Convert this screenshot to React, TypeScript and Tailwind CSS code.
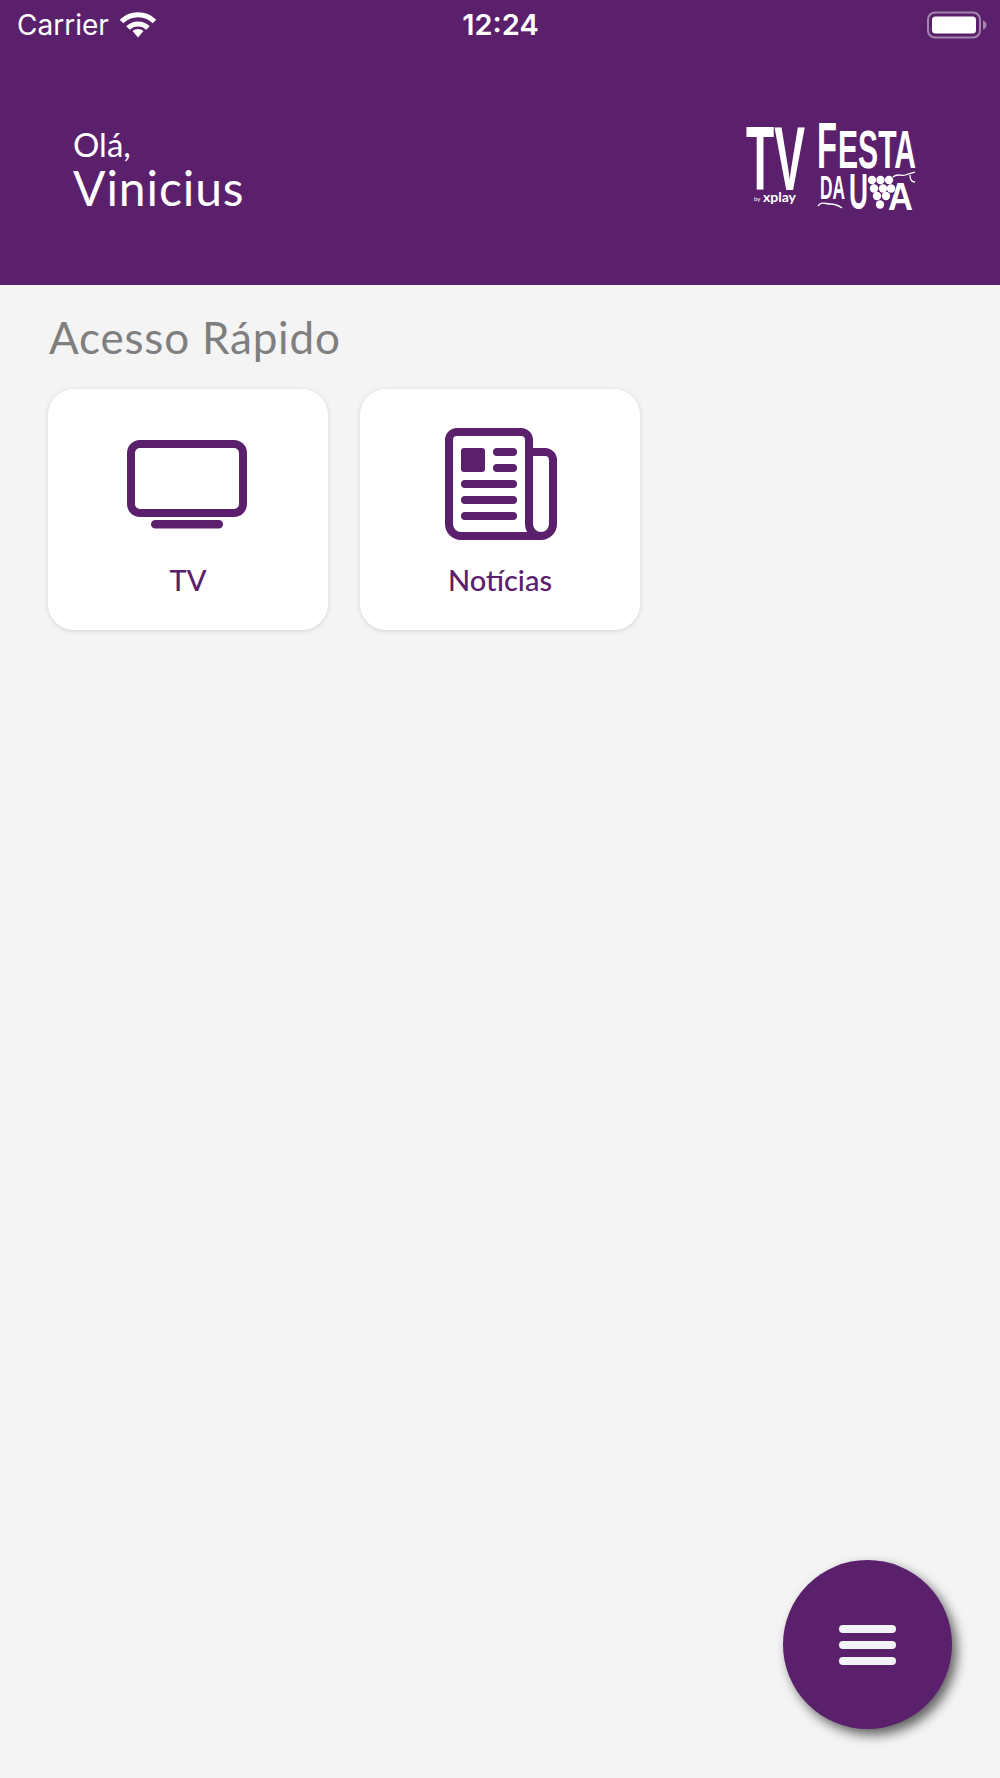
import React from "react";

const font = "font-['Lato','Noto_Sans',sans-serif]";
const sys = "font-['Inter','Liberation_Sans',sans-serif]";

function Wifi() {
  return (
    <svg width="38" height="28" viewBox="0 0 38 28" fill="none" stroke="#fff" strokeWidth="5">
      <path d="M2.5 10.5C11.5 1.5 26.5 1.5 35.5 10.5" />
      <path d="M9 17C14.5 11.5 23.5 11.5 29 17" />
      <path d="M13.5 20L19 26.5L24.5 20C21.5 17.2 16.5 17.2 13.5 20Z" fill="#fff" stroke="none" />
    </svg>
  );
}

function Battery() {
  return (
    <svg width="60" height="28" viewBox="0 0 60 28" fill="none">
      <rect x="1" y="1.5" width="52" height="25" rx="7" stroke="#fff" strokeOpacity="0.45" strokeWidth="2" />
      <rect x="5" y="5.5" width="44" height="17" rx="3.5" fill="#fff" />
      <path d="M56 9.5C58.5 10.5 59.5 12 59.5 14C59.5 16 58.5 17.5 56 18.5Z" fill="#fff" fillOpacity="0.45" />
    </svg>
  );
}

function Logo() {
  const condensed = "'Liberation Sans Narrow','Liberation Sans',sans-serif";
  return (
    <svg width="180" height="96" viewBox="0 0 180 96" fill="#fff">
      <text x="6" y="70" fontFamily={condensed} fontWeight="700" fontSize="91" textLength="59" lengthAdjust="spacingAndGlyphs">TV</text>
      <text x="14" y="81" fontFamily="'Lato',sans-serif" fontSize="6">by</text>
      <text x="23" y="82" fontFamily="'Lato',sans-serif" fontWeight="700" fontSize="14" textLength="33" lengthAdjust="spacingAndGlyphs">xplay</text>
      <text x="77" y="48" fontFamily={condensed} fontWeight="700" fontSize="64" textLength="20" lengthAdjust="spacingAndGlyphs">F</text>
      <text x="98" y="48" fontFamily={condensed} fontWeight="700" fontSize="53" textLength="78" lengthAdjust="spacingAndGlyphs">ESTA</text>
      <text x="80" y="79" fontFamily={condensed} fontWeight="700" fontSize="33" textLength="25" lengthAdjust="spacingAndGlyphs">DA</text>
      <text x="109" y="89" fontFamily={condensed} fontWeight="700" fontSize="50" textLength="19" lengthAdjust="spacingAndGlyphs">U</text>
      <text x="148" y="90" fontFamily={condensed} fontWeight="700" fontSize="39" textLength="25" lengthAdjust="spacingAndGlyphs">A</text>
      {[
        [132, 60], [140.5, 60], [149, 60],
        [134, 68.5], [143, 68.5], [151, 68.5],
        [137, 76], [146, 76],
        [140, 84.5],
      ].map(([cx, cy]) => (
        <circle key={`${cx}-${cy}`} cx={cx} cy={cy} r="4.2" />
      ))}
      <path d="M78 86C82 81 85 84 90 84C95 84 98 85 102 88M153 57C158 52 162 58 168 54L175 52M170 55C170 60 172 62 175 62" fill="none" stroke="#fff" strokeWidth="1.3" />
    </svg>
  );
}

function TvIcon() {
  return (
    <svg width="120" height="90" viewBox="0 0 120 90" fill="none">
      <rect x="4" y="4" width="112" height="69" rx="9" stroke="#5b206c" strokeWidth="8" />
      <rect x="24" y="80" width="72" height="8.5" rx="4.25" fill="#5b206c" />
    </svg>
  );
}

function NewsIcon() {
  return (
    <svg width="112" height="112" viewBox="0 0 112 112" fill="none">
      <path
        d="M96 108a12 12 0 0 1-12-12V12a8 8 0 0 0-8-8H12a8 8 0 0 0-8 8V96a12 12 0 0 0 12 12H96a12 12 0 0 0 12-12V32a8 8 0 0 0-8-8H84"
        stroke="#5b206c"
        strokeWidth="8"
      />
      <rect x="16" y="20" width="24" height="24" rx="3" fill="#5b206c" />
      <rect x="48" y="20" width="24" height="8" rx="4" fill="#5b206c" />
      <rect x="48" y="36" width="24" height="8" rx="4" fill="#5b206c" />
      <rect x="16" y="52" width="56" height="8" rx="4" fill="#5b206c" />
      <rect x="16" y="68" width="56" height="8" rx="4" fill="#5b206c" />
      <rect x="16" y="84" width="56" height="8" rx="4" fill="#5b206c" />
    </svg>
  );
}

function Card({ icon, label, iconBox }: { icon: React.ReactNode; label: string; iconBox: string }) {
  return (
    <div className="w-[280px] h-[241px] bg-white rounded-[26px] shadow-[0_1px_5px_rgba(0,0,0,0.13)] flex flex-col items-center">
      <div className={iconBox}>{icon}</div>
      <span className={`mt-auto mb-[32px] text-[29px] leading-[36px] font-medium text-[#5b206c] ${font}`}>{label}</span>
    </div>
  );
}

export default function App() {
  return (
    <div className={`relative w-full h-[1778px] overflow-hidden bg-[#f4f4f4] ${font}`}>
      <header className="h-[285px] bg-[#5b206c] text-white flex flex-col">
        <div className="h-[50px] pl-[17px] pr-[13px] grid grid-cols-3 items-center">
          <div className="flex items-center gap-[10px]">
            <span className={`text-[28px] leading-[32px] ${sys}`}>Carrier</span>
            <Wifi />
          </div>
          <span className={`text-center pr-[3px] text-[29px] leading-[32px] font-semibold ${sys}`}>12:24</span>
          <div className="flex justify-end">
            <Battery />
          </div>
        </div>
        <div className="flex-1 flex justify-between pl-[73px] pr-[80px]">
          <div className="pt-[76px] flex flex-col">
            <span className="text-[33px] leading-[36px]">Olá,</span>
            <span className="text-[48px] leading-[51px] tracking-[0.9px]">Vinicius</span>
          </div>
          <div className="pt-[70px]">
            <Logo />
          </div>
        </div>
      </header>
      <main className="pl-[48px]">
        <h2 className="pl-[1px] pt-[24px] text-[44px] leading-[56px] tracking-[0.8px] font-normal text-[#7f7f7f]">Acesso Rápido</h2>
        <div className="mt-[24px] flex gap-[32px]">
          <Card icon={<TvIcon />} label="TV" iconBox="pt-[51px] pr-[2px]" />
          <Card icon={<NewsIcon />} label="Notícias" iconBox="pt-[39px] pl-[2px]" />
        </div>
      </main>
      <button className="absolute right-[48px] bottom-[49px] w-[169px] h-[169px] rounded-full bg-[#5b206c] shadow-[5px_6px_12px_rgba(0,0,0,0.6)] flex flex-col items-center justify-center gap-[8px]">
        <span className="w-[57px] h-[8px] rounded-full bg-[#f3f4f8]" />
        <span className="w-[57px] h-[8px] rounded-full bg-[#f3f4f8]" />
        <span className="w-[57px] h-[8px] rounded-full bg-[#f3f4f8]" />
      </button>
    </div>
  );
}
